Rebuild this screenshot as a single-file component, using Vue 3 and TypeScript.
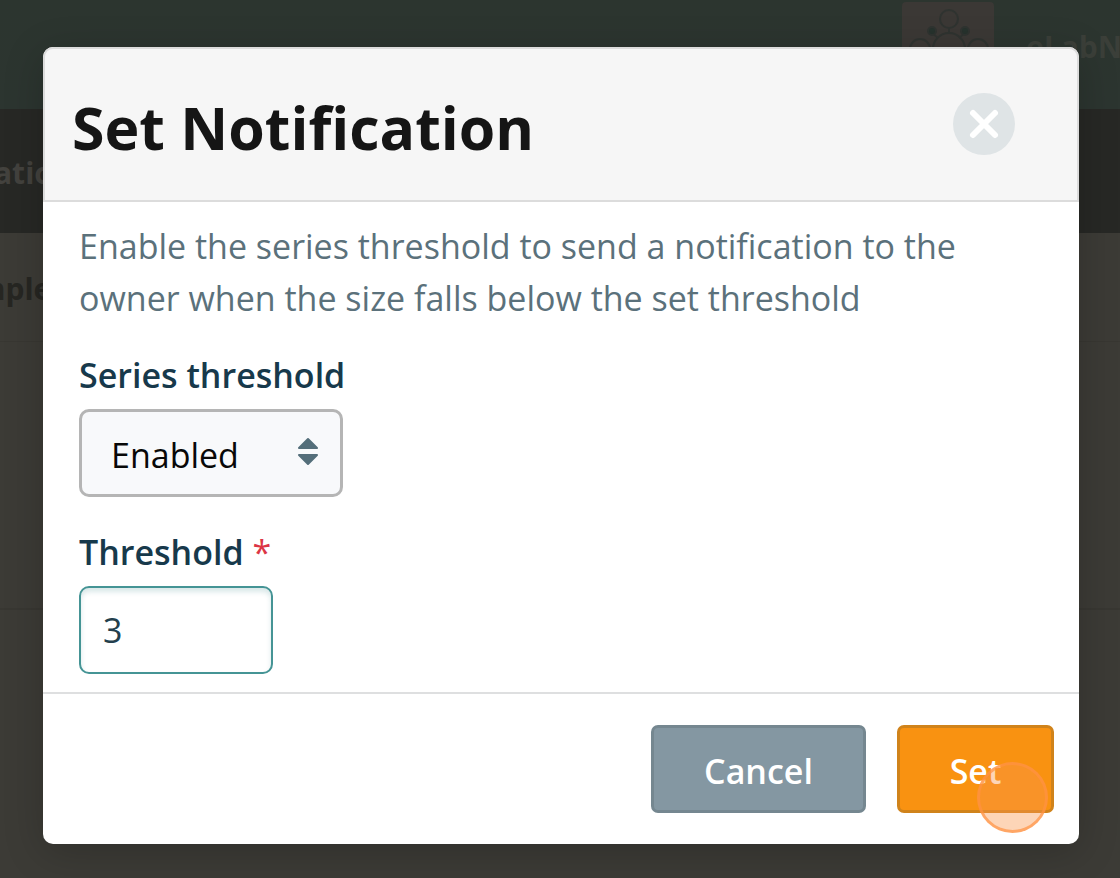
<script setup lang="ts">
import { ref } from 'vue'

type Mode = 'enabled' | 'disabled'

const mode = ref<Mode>('enabled')
const threshold = ref('3')
</script>

<template>
  <div class="page">
    <div class="backdrop" aria-hidden="true">
      <div class="brand-bar">
        <div class="tile">
          <svg viewBox="0 0 92 92" width="92" height="92" fill="none" stroke="#2f3330" stroke-width="2">
            <circle cx="47" cy="17" r="9" />
            <circle cx="47" cy="47" r="16" />
            <circle cx="18" cy="47" r="10" />
            <circle cx="76" cy="47" r="10" />
            <path d="M47 26v6M30 31l6 5M63 31l-6 5" />
            <circle cx="30" cy="29" r="4" fill="#26322d" />
            <circle cx="63" cy="29" r="4" fill="#26322d" />
          </svg>
        </div>
        <span class="brand">eLabNext</span>
      </div>
      <div class="menu-bar">ation</div>
      <div class="content-row">mple</div>
      <div class="content-block"></div>
    </div>

    <div class="overlay">
      <form class="dialog" role="dialog" aria-labelledby="dialog-title" @submit.prevent>
        <header class="head">
          <h1 id="dialog-title">Set Notification</h1>
          <button class="close" type="button" aria-label="Close">
            <svg viewBox="0 0 62 62" width="62" height="62">
              <path d="M20 20L42 42M42 20L20 42" fill="none" stroke="#fff" stroke-width="6" stroke-linecap="round" />
            </svg>
          </button>
        </header>
        <div class="body">
          <p>Enable the series threshold to send a notification to the owner when the size falls below the set threshold</p>
          <div class="field">
            <label for="mode">Series threshold</label>
            <div class="select">
              <select id="mode" v-model="mode">
                <option value="enabled">Enabled</option>
                <option value="disabled">Disabled</option>
              </select>
              <svg class="arrows" viewBox="0 0 22 30" width="22" height="30" fill="#546e7a" stroke="#546e7a" stroke-width="2" stroke-linejoin="round">
                <path d="M11 2L20 11H2ZM2 18H20L11 27Z" />
              </svg>
            </div>
          </div>
          <div class="field">
            <label for="threshold">Threshold <span class="required">*</span></label>
            <input id="threshold" v-model="threshold" type="text" inputmode="numeric" required />
          </div>
        </div>
        <footer class="foot">
          <button class="button cancel" type="button">Cancel</button>
          <button class="button set" type="submit">Set<span class="click-mark"></span></button>
        </footer>
      </form>
    </div>
  </div>
</template>

<style>
body {
  margin: 0;
  background: #3c3b36;
}
</style>

<style scoped>
.page {
  position: relative;
  min-height: 100vh;
  overflow: hidden;
  font-family: "Open Sans", "Noto Sans", sans-serif;
  font-size: 34px;
  line-height: 52px;
  font-variant-ligatures: none;
}
.page * {
  box-sizing: border-box;
}
.backdrop {
  position: absolute;
  inset: 0;
  overflow: hidden;
  background: #3c3b36;
  font-size: 30px;
  font-weight: 700;
}
.brand-bar {
  display: flex;
  justify-content: flex-end;
  gap: 32px;
  height: 109px;
  background: linear-gradient(#2c352f, #2c3530);
}
.tile {
  width: 92px;
  height: 92px;
  margin-top: 2px;
  border-radius: 4px;
  background: #3b3835;
}
.brand {
  width: 94px;
  padding-top: 21px;
  color: #3b3f39;
}
.menu-bar {
  height: 124px;
  padding-top: 38px;
  background: #272825;
  color: #43423e;
  text-indent: -6px;
}
.content-row {
  height: 109px;
  padding-top: 30px;
  border-bottom: 1px solid #383732;
  color: #262622;
  text-indent: -24px;
}
.content-block {
  height: 268px;
  border-bottom: 2px solid #383732;
}
.overlay {
  position: relative;
  padding: 47px 41px 34px 43px;
}
.dialog {
  border-radius: 10px;
  background: #fff;
  box-shadow: 0 8px 40px rgba(0, 0, 0, 0.2);
}
.head {
  display: flex;
  align-items: center;
  justify-content: space-between;
  height: 155px;
  padding: 0 62px 2px 27px;
  border: 2px solid #dcdcdc;
  border-radius: 10px 10px 0 0;
  background: #f6f6f6;
}
h1 {
  margin: 0;
  padding-top: 6px;
  font-size: 59px;
  line-height: 80px;
  font-weight: 700;
  color: #151515;
}
.close {
  width: 62px;
  height: 62px;
  padding: 0;
  border: 0;
  border-radius: 50%;
  background: #dfe4e6;
}
.close svg {
  display: block;
}
.body {
  padding: 18px 36px;
}
p {
  margin: 0 0 25px;
  color: #5b717b;
}
.field {
  display: flex;
  flex-direction: column;
  align-items: flex-start;
}
.field + .field {
  margin-top: 29px;
}
label {
  margin-bottom: 8px;
  font-weight: 600;
  color: #17394b;
}
.required {
  font-weight: 400;
  color: #dc3545;
}
.select {
  position: relative;
}
select,
input {
  display: block;
  height: 88px;
  border-radius: 10px;
  font: inherit;
  outline: none;
}
select {
  width: 264px;
  padding: 3px 29px 0;
  border: 3px solid #b5b5b5;
  background: #f8f9fb;
  color: #080808;
  appearance: none;
}
.arrows {
  position: absolute;
  top: 28px;
  right: 24px;
  pointer-events: none;
}
input {
  width: 194px;
  padding: 0 22px;
  border: 2px solid #459495;
  background: #fff;
  box-shadow: inset 0 4px 5px rgba(23, 110, 120, 0.16);
  color: #243f4d;
}
.foot {
  display: flex;
  justify-content: flex-end;
  gap: 31px;
  padding: 31px 25px;
  border-top: 2px solid #dedfe0;
}
.button {
  height: 88px;
  border: 3px solid;
  border-radius: 7px;
  padding: 4px 0 0;
  font: inherit;
  font-weight: 600;
  color: #fff;
}
.cancel {
  width: 215px;
  border-color: #758790;
  background: #8497a2;
}
.set {
  position: relative;
  width: 157px;
  border-color: #d0831b;
  background: #f99211;
}
.click-mark {
  position: absolute;
  right: 3px;
  bottom: -23px;
  width: 71px;
  height: 71px;
  border: 3px solid rgba(255, 145, 65, 0.7);
  border-radius: 50%;
  background: rgba(250, 150, 75, 0.4);
  pointer-events: none;
}
</style>
